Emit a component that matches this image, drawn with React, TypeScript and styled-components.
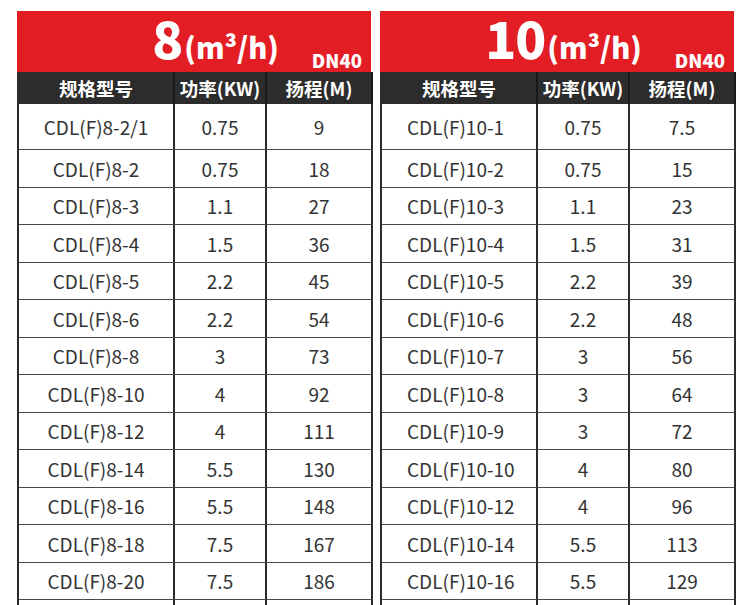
import React from "react";
import styled, { createGlobalStyle } from "styled-components";

const Global = createGlobalStyle`
  html, body { margin: 0; padding: 0; background: #ffffff; }
  body { font-family: "Noto Sans CJK SC", "Noto Sans", sans-serif; }
`;

type Row = [string, string, string];

const left: Row[] = [
  ["CDL(F)8-2/1", "0.75", "9"],
  ["CDL(F)8-2", "0.75", "18"],
  ["CDL(F)8-3", "1.1", "27"],
  ["CDL(F)8-4", "1.5", "36"],
  ["CDL(F)8-5", "2.2", "45"],
  ["CDL(F)8-6", "2.2", "54"],
  ["CDL(F)8-8", "3", "73"],
  ["CDL(F)8-10", "4", "92"],
  ["CDL(F)8-12", "4", "111"],
  ["CDL(F)8-14", "5.5", "130"],
  ["CDL(F)8-16", "5.5", "148"],
  ["CDL(F)8-18", "7.5", "167"],
  ["CDL(F)8-20", "7.5", "186"],
  ["", "", ""],
];

const right: Row[] = [
  ["CDL(F)10-1", "0.75", "7.5"],
  ["CDL(F)10-2", "0.75", "15"],
  ["CDL(F)10-3", "1.1", "23"],
  ["CDL(F)10-4", "1.5", "31"],
  ["CDL(F)10-5", "2.2", "39"],
  ["CDL(F)10-6", "2.2", "48"],
  ["CDL(F)10-7", "3", "56"],
  ["CDL(F)10-8", "3", "64"],
  ["CDL(F)10-9", "3", "72"],
  ["CDL(F)10-10", "4", "80"],
  ["CDL(F)10-12", "4", "96"],
  ["CDL(F)10-14", "5.5", "113"],
  ["CDL(F)10-16", "5.5", "129"],
  ["", "", ""],
];

const Page = styled.div`
  display: flex;
  align-items: flex-start;
  gap: 9px;
  padding: 11px 0 0 17px;
  height: 605px;
  box-sizing: border-box;
  overflow: hidden;
`;

const Table = styled.div`
  width: 354px;
  flex-shrink: 0;
  display: flex;
  flex-direction: column;
`;

const Banner = styled.div`
  height: 61px;
  flex-shrink: 0;
  background: #e31d24;
  display: flex;
  justify-content: flex-end;
  align-items: flex-end;
  gap: 33px;
  padding-right: 9px;
  color: #ffffff;
  font-weight: 900;
  line-height: 1;
`;

const Flow = styled.div`
  display: flex;
  align-items: baseline;
  margin-bottom: 9px;
`;

const Big = styled.span`
  font-size: 51px;
  letter-spacing: -1px;
`;

const Unit = styled.span`
  font-size: 29px;
  margin-left: 2px;
`;

const Dn = styled.span`
  font-size: 18.5px;
  margin-bottom: 3px;
`;

const Grid = styled.div<{ $first: number }>`
  display: grid;
  flex-shrink: 0;
  grid-template-columns: 156px 92px 106px;
  grid-auto-rows: 37.5px;
  grid-template-rows: 32px ${(p) => p.$first}px;
  border-left: 2px solid #2b2b2b;
  box-sizing: border-box;
`;

const HeadCell = styled.div`
  background: #2c2c2c;
  color: #ffffff;
  font-weight: 700;
  font-size: 18.5px;
  display: flex;
  align-items: center;
  justify-content: center;
  border-right: 2px solid #1a1a1a;
  box-sizing: border-box;
`;

const Cell = styled.div<{ $align?: "left" | "center"; $pad?: number }>`
  display: flex;
  align-items: center;
  justify-content: ${(p) => (p.$align === "left" ? "flex-start" : "center")};
  padding-left: ${(p) => p.$pad ?? 0}px;
  font-size: 19px;
  color: #333333;
  border-right: 2px solid #2b2b2b;
  border-bottom: 1.5px solid #4a4a4a;
  box-sizing: border-box;
  white-space: nowrap;
`;

function PumpTable({
  flow,
  rows,
  align,
  pad,
}: {
  flow: string;
  rows: Row[];
  align: "left" | "center";
  pad: number;
}) {
  return (
    <Table>
      <Banner>
        <Flow>
          <Big>{flow}</Big>
          <Unit>(m³/h)</Unit>
        </Flow>
        <Dn>DN40</Dn>
      </Banner>
      <Grid $first={46}>
        <HeadCell>规格型号</HeadCell>
        <HeadCell>功率(KW)</HeadCell>
        <HeadCell>扬程(M)</HeadCell>
        {rows.map((r, i) => (
          <React.Fragment key={i}>
            <Cell $align={align} $pad={pad}>
              {r[0]}
            </Cell>
            <Cell>{r[1]}</Cell>
            <Cell>{r[2]}</Cell>
          </React.Fragment>
        ))}
      </Grid>
    </Table>
  );
}

export default function App() {
  return (
    <>
      <Global />
      <Page>
        <PumpTable flow="8" rows={left} align="center" pad={0} />
        <PumpTable flow="10" rows={right} align="left" pad={25} />
      </Page>
    </>
  );
}
